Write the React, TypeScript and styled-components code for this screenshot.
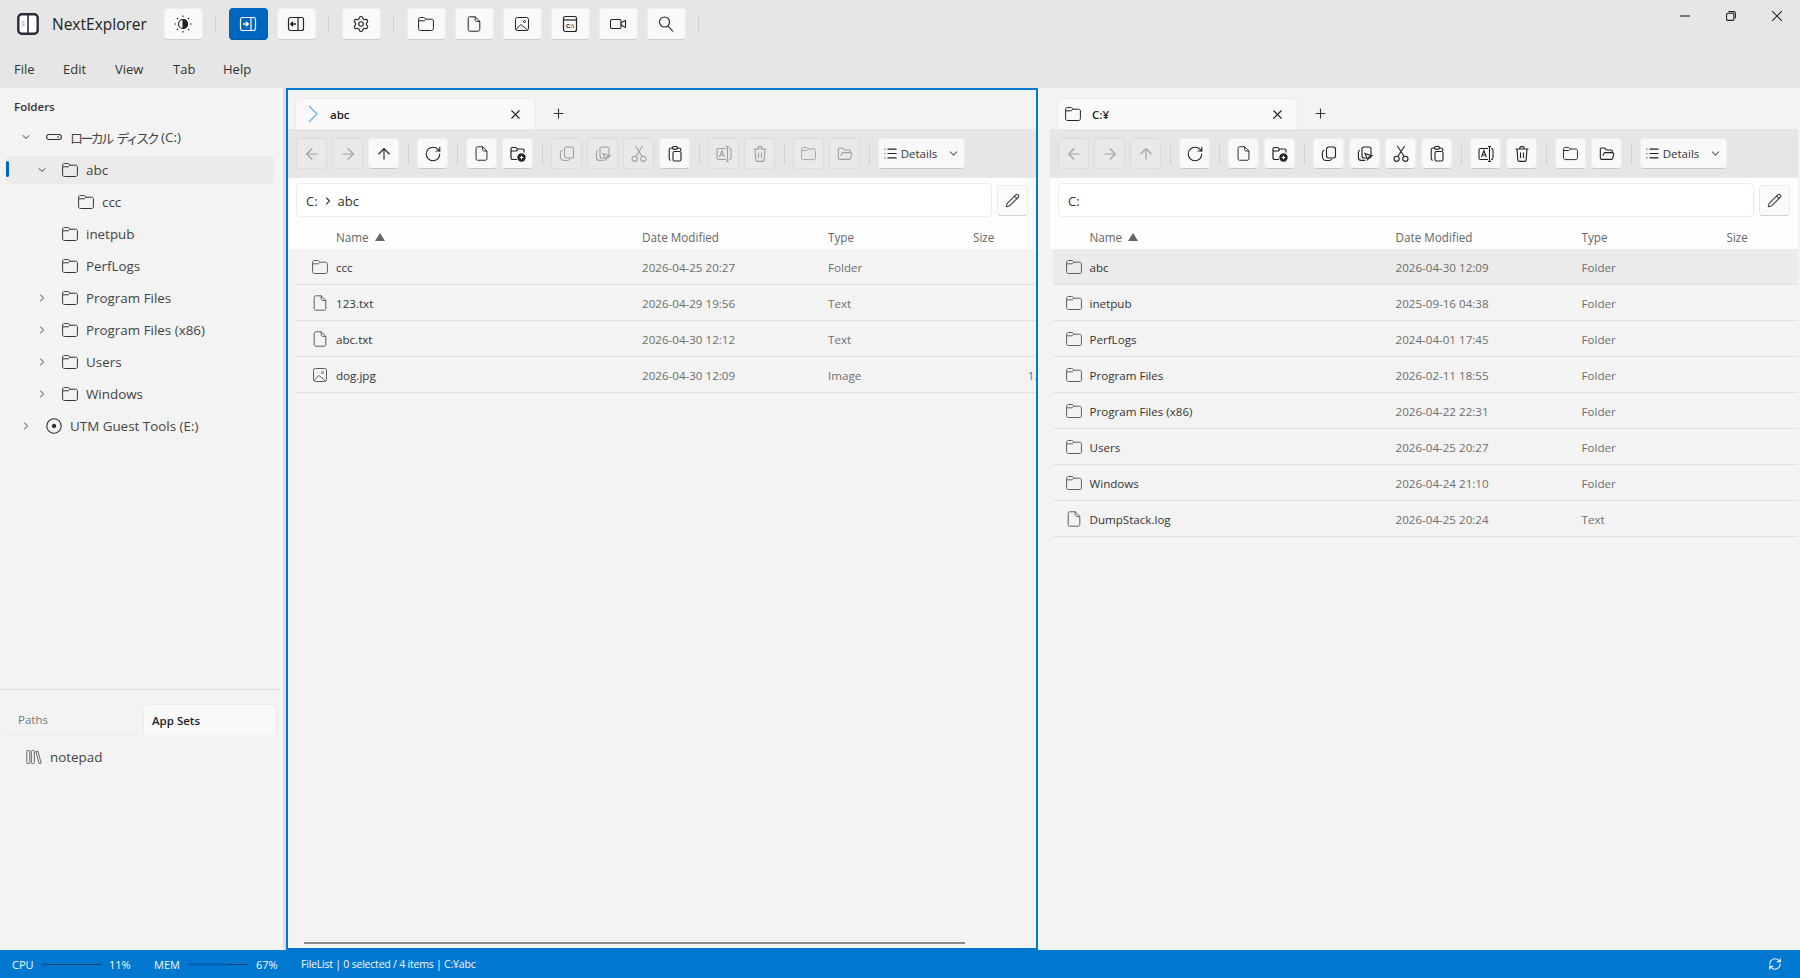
import React from 'react';
import styled, { createGlobalStyle, css } from 'styled-components';
import {
  ArrowLeft, ArrowRight, ArrowUp, ChevronDown, ChevronRight, FolderOpen, List,
  Pencil, Plus, RefreshCw, RotateCw, Settings, Video, X,
} from 'lucide-react';

const FONT = '"Open Sans", "Noto Sans CJK JP", sans-serif';

const GlobalStyle = createGlobalStyle`
  html, body, #root { margin: 0; height: 100%; }
  body { font-family: ${FONT}; background: #e6e6e6; color: #222; overflow: hidden; }
  * { box-sizing: border-box; }
`;

const Shell = styled.div`
  display: flex;
  flex-direction: column;
  width: 1800px;
  height: 978px;
`;

const TitleBar = styled.div`
  display: flex;
  align-items: center;
  height: 48px;
  padding: 0 0 0 17px;
  flex: none;
`;

const Logo = styled.svg`
  width: 22px;
  height: 22px;
  margin-right: 13px;
  flex: none;
`;

const AppName = styled.div`
  width: 111.5px;
  font-size: 15.5px;
  font-weight: 500;
  color: #222;
`;

const TitleGroup = styled.div`
  display: flex;
  align-items: center;
  gap: 9px;
`;

const TitleButton = styled.div<{ $active?: boolean }>`
  display: flex;
  align-items: center;
  justify-content: center;
  width: 39px;
  height: 32px;
  border-radius: 4px;
  border: 1px solid ${(p) => (p.$active ? '#0067c0' : '#ededed')};
  border-bottom-color: ${(p) => (p.$active ? '#005a9e' : '#cdcdcd')};
  background: ${(p) => (p.$active ? '#0067c0' : '#f9f9f9')};
  color: ${(p) => (p.$active ? '#fff' : '#222')};
`;

const TitleSep = styled.div`
  width: 1px;
  height: 16px;
  margin: 0 12.5px;
  background: #d2d2d2;
`;

const WindowControls = styled.div`
  display: flex;
  align-items: center;
  gap: 36px;
  margin-left: auto;
  margin-right: 18px;
  align-self: flex-start;
  padding-top: 11px;
`;

const MenuBar = styled.div`
  display: flex;
  align-items: center;
  height: 40px;
  padding: 2px 0 0 14px;
  flex: none;
`;

const MenuItem = styled.div<{ $w: number }>`
  width: ${(p) => p.$w}px;
  font-size: 13px;
  color: #333;
`;

const Workspace = styled.div`
  display: flex;
  flex: 1;
  min-height: 0;
`;

const Sidebar = styled.div`
  display: flex;
  flex-direction: column;
  width: 283px;
  flex: none;
  background: #f3f3f3;
`;

const Sash = styled.div`
  width: 3px;
  flex: none;
  background: #dedede;
`;

const TreeSection = styled.div`
  height: 602px;
  padding: 10px 6px 0 6px;
  border-bottom: 1px solid #dcdcdc;
  margin-right: 3px;
`;

const SectionLabel = styled.div`
  font-size: 11.5px;
  font-weight: 600;
  color: #333;
  margin: 0 0 7px 8px;
  height: 18px;
  line-height: 18px;
`;

const TreeRow = styled.div<{ $depth: number; $selected?: boolean; $gap: number }>`
  position: relative;
  display: flex;
  align-items: center;
  height: 28px;
  margin-bottom: ${(p) => p.$gap}px;
  padding-left: ${(p) => p.$depth}px;
  border-radius: 4px;
  font-size: 13.4px;
  color: #444;
  white-space: pre;
  background: ${(p) => (p.$selected ? '#ebebeb' : 'transparent')};
  ${(p) =>
    p.$selected &&
    css`
      &::before {
        content: '';
        position: absolute;
        left: 0;
        top: 5px;
        width: 3px;
        height: 16px;
        border-radius: 2px;
        background: #0067c0;
      }
    `}
`;

const KanaLabel = styled.span`
  font-size: 13px;
  letter-spacing: -2.6px;
  word-spacing: 4px;
  margin-right: 4px;
`;

const Chevron = styled.span`
  display: flex;
  width: 12px;
  margin-right: 14px;
  color: #8a8a8a;
  flex: none;
`;

const TreeIcon = styled.span`
  display: flex;
  width: 16px;
  margin-right: 8px;
  color: #333;
  flex: none;
`;

const BottomTabs = styled.div`
  display: flex;
  align-items: flex-end;
  height: 31px;
  margin: 14px 6px 0 2px;
  flex: none;
`;

const BottomTab = styled.div<{ $active?: boolean }>`
  height: ${(p) => (p.$active ? '31px' : '30px')};
  width: ${(p) => (p.$active ? '134px' : '141px')};
  padding-left: ${(p) => (p.$active ? '8px' : '16px')};
  display: flex;
  align-items: center;
  font-size: 11.5px;
  font-weight: ${(p) => (p.$active ? 600 : 400)};
  color: ${(p) => (p.$active ? '#222' : '#777')};
  background: ${(p) => (p.$active ? '#f9f9f9' : 'transparent')};
  border: 1px solid #ececec;
  border-width: ${(p) => (p.$active ? '1px 1px 0 1px' : '0 0 1px 0')};
  border-radius: ${(p) => (p.$active ? '6px 6px 0 0' : '0')};
`;

const AppSetRow = styled.div`
  display: flex;
  align-items: center;
  gap: 8px;
  height: 28px;
  margin-top: 8px;
  padding-left: 26px;
  font-size: 13.4px;
  color: #444;
`;

const Panes = styled.div`
  display: flex;
  flex: 1;
  min-width: 0;
  gap: 10px;
  background: #f3f3f3;
`;

const Pane = styled.div<{ $active?: boolean }>`
  display: flex;
  flex-direction: column;
  width: 752px;
  flex: none;
  overflow: hidden;
  position: relative;
  background: #f3f3f3;
  border: 2px solid ${(p) => (p.$active ? '#0078d0' : 'transparent')};
`;

const TabStrip = styled.div`
  display: flex;
  align-items: flex-end;
  height: 39px;
  padding-left: 7px;
  flex: none;
`;

const Tab = styled.div`
  display: flex;
  align-items: center;
  width: 241px;
  height: 31px;
  padding: 0 12px 0 7px;
  background: #f9f9f9;
  border: 1px solid #ececec;
  border-bottom: 0;
  border-radius: 6px 6px 0 0;
  font-size: 11.5px;
  font-weight: 600;
  color: #222;
`;

const TabIcon = styled.span`
  display: flex;
  width: 27px;
  flex: none;
  color: #222;
`;

const TabTitle = styled.span`
  flex: 1;
`;

const TabAdd = styled.div`
  display: flex;
  align-self: center;
  margin: 8px 0 0 15px;
  color: #333;
`;

const Toolbar = styled.div`
  display: flex;
  align-items: center;
  gap: 5px;
  height: 49px;
  padding: 0 0 0 8px;
  background: #e6e6e6;
  flex: none;
`;

const ToolButton = styled.div<{ $off?: boolean; $wide?: boolean }>`
  display: flex;
  align-items: center;
  justify-content: center;
  width: ${(p) => (p.$wide ? '87px' : '31px')};
  height: 31px;
  border-radius: 4px;
  border: 1px solid ${(p) => (p.$off ? '#dcdcdc' : '#ededed')};
  border-bottom-color: ${(p) => (p.$off ? '#dcdcdc' : '#c8c8c8')};
  background: ${(p) => (p.$off ? '#e9e9e9' : '#f9f9f9')};
  color: ${(p) => (p.$off ? '#a0a0a0' : '#222')};
  font-size: 11.5px;
  flex: none;
`;

const ToolSep = styled.div`
  width: 1px;
  height: 20px;
  margin: 0 3.5px;
  background: #d0d0d0;
  flex: none;
`;

const DetailsLabel = styled.span`
  margin: 0 10px 0 3px;
  color: #333;
`;

const DetailsCaret = styled.span`
  display: flex;
  color: #666;
`;

const AddressRow = styled.div`
  display: flex;
  align-items: flex-end;
  gap: 5px;
  height: 39px;
  padding: 0 8px;
  background: #fefefe;
  flex: none;
`;

const AddressBox = styled.div`
  flex: 1;
  display: flex;
  align-items: center;
  gap: 4px;
  height: 34px;
  padding: 1px 0 0 9px;
  background: #fff;
  border: 1px solid #ededed;
  border-radius: 4px;
  font-size: 13px;
  color: #333;
`;

const EditButton = styled.div`
  display: flex;
  align-items: center;
  justify-content: center;
  width: 31px;
  height: 31px;
  margin-bottom: 1.5px;
  flex: none;
  border-radius: 4px;
  border: 1px solid #ececec;
  border-bottom-color: #d0d0d0;
  background: #fbfbfb;
  color: #444;
`;

const ListArea = styled.div<{ $inset: number }>`
  width: 760px;
  margin-left: ${(p) => p.$inset}px;
  flex: 1;
`;

const ListGrid = css<{ $lead: number }>`
  display: grid;
  grid-template-columns: ${(p) => p.$lead}px 306px 186px 145px 92px;
  align-items: center;
`;

const HeaderRow = styled.div<{ $lead: number; $inset: number }>`
  ${ListGrid}
  height: 32px;
  margin-left: ${(p) => -p.$inset}px;
  padding: 7px 0 0 ${(p) => p.$inset}px;
  background: #fefefe;
  font-size: 11.7px;
  font-weight: 500;
  color: #666;
`;

const HeaderCell = styled.div<{ $col: number }>`
  grid-column: ${(p) => p.$col};
  display: flex;
  align-items: center;
  gap: 6px;
`;

const SortArrow = styled.span`
  width: 0;
  height: 0;
  border-left: 5px solid transparent;
  border-right: 5px solid transparent;
  border-bottom: 8px solid #666;
`;

const FileRow = styled.div<{ $lead: number; $selected?: boolean }>`
  ${ListGrid}
  height: 36px;
  padding-top: 1px;
  border-bottom: 1px solid #e2e2e2;
  background: ${(p) => (p.$selected ? '#ebebeb' : 'transparent')};
  font-size: 11.6px;
  color: #6e6e6e;
`;

const FileIcon = styled.span`
  display: flex;
  justify-content: flex-end;
  padding-right: 8px;
  color: #5c5c5c;
`;

const FileName = styled.span`
  color: #333;
`;

const SizeCell = styled.span`
  text-align: right;
  white-space: nowrap;
`;

const Scrollbar = styled.div`
  position: absolute;
  left: 16px;
  bottom: 4px;
  width: 661px;
  height: 2px;
  background: #8a8a8a;
`;

const StatusBar = styled.div`
  display: flex;
  align-items: center;
  height: 28px;
  padding: 0 18px 0 12px;
  background: #0078d0;
  color: #f4f9fd;
  font-size: 11px;
  flex: none;
`;

const StatLabel = styled.span<{ $w: number }>`
  width: ${(p) => p.$w}px;
  flex: none;
`;

const Meter = styled.div`
  position: relative;
  width: 60px;
  height: 1px;
  margin-right: 8px;
  background: #0b3f6b;
  flex: none;
`;

const MeterFill = styled.div`
  position: absolute;
  left: 0;
  top: -1px;
  height: 3px;
  border-radius: 2px;
  background: #0063b8;
`;

const StatValue = styled.span`
  width: 45px;
  flex: none;
`;

const StatusText = styled.span`
  font-size: 10.6px;
  letter-spacing: -0.25px;
`;

const StatusSync = styled.span`
  display: flex;
  margin-left: auto;
`;

const S = { strokeWidth: 1.1, absoluteStrokeWidth: true };

const FolderGlyph = ({ size = 16 }: { size?: number }) => (
  <svg width={size} height={size} viewBox="0 0 16 16" fill="none" stroke="currentColor" strokeWidth="1">
    <path d="M.6 3.3c0-1 .8-1.8 1.8-1.8h3.3c.4 0 .8.2 1.1.5L8 3.2h5.6c1 0 1.8.8 1.8 1.8v7.7c0 1-.8 1.8-1.8 1.8H2.4c-1 0-1.8-.8-1.8-1.8z" />
    <path d="M.6 4.8h5.2c.5 0 .9-.2 1.2-.5L8 3.2" />
  </svg>
);

const FileGlyph = ({ size = 16 }: { size?: number }) => (
  <svg width={size} height={size} viewBox="0 0 16 16" fill="none" stroke="currentColor" strokeWidth="1">
    <path d="M3.8.8h5.4l4.6 4.6v8.3c0 .9-.7 1.5-1.5 1.5H3.8c-.9 0-1.6-.6-1.6-1.5V2.3c0-.8.7-1.5 1.6-1.5z" />
    <path d="M9.2.8v3c0 .9.7 1.6 1.6 1.6h3" />
  </svg>
);

const ImageGlyph = ({ size = 16 }: { size?: number }) => (
  <svg width={size} height={size} viewBox="0 0 16 16" fill="none" stroke="currentColor" strokeWidth="1">
    <rect x="1.5" y="1.5" width="13" height="13" rx="2" />
    <path d="M2 13.5l4.2-4.4c.5-.5 1.1-.5 1.6 0l5.8 5" />
    <circle cx="10.5" cy="5.5" r="1" />
  </svg>
);

const TabChevron = () => (
  <svg width="16" height="18" viewBox="0 0 16 18" fill="none" stroke="#5db4f5" strokeWidth="1.2">
    <path d="M6 1l8 8-8 8" />
  </svg>
);

const NewFolderGlyph = () => (
  <svg width="18" height="18" viewBox="0 0 18 18" fill="none" stroke="currentColor" strokeWidth="1.2">
    <path d="M8 14.5H3.6c-.9 0-1.6-.7-1.6-1.6V4.1c0-.9.7-1.6 1.6-1.6h2.6c.4 0 .7.1 1 .4l1.1 1.1h5.1c.9 0 1.6.7 1.6 1.6v2" />
    <path d="M2 6h5.5l1.3-1.6" />
    <circle cx="12.5" cy="12.5" r="3.6" fill="currentColor" />
    <path d="M10.8 12.5h3.4M12.5 10.8v3.4" stroke="#fff" />
  </svg>
);

const CopyGlyph = () => (
  <svg width="18" height="18" viewBox="0 0 18 18" fill="none" stroke="currentColor" strokeWidth="1.1">
    <rect x="6.5" y="2" width="9" height="11" rx="2.2" />
    <path d="M4.4 5c-1.2.4-2 1.4-2 2.6v4.2c0 2 1.6 3.7 3.7 3.7h3.2c1 0 1.9-.6 2.3-1.5" />
  </svg>
);

const CopySelectGlyph = () => (
  <svg width="18" height="18" viewBox="0 0 18 18" fill="none" stroke="currentColor" strokeWidth="1.1">
    <rect x="6" y="2" width="9" height="11" rx="2" />
    <path d="M4 5.2c-1 .3-1.6 1-1.6 2v5.2c0 1.7 1.3 3 3 3h4" />
    <path d="M9 8.5l7 2.2-3 1.2-1.2 3z" fill="#e9e9e9" />
  </svg>
);

const ScissorsGlyph = () => (
  <svg width="18" height="18" viewBox="0 0 18 18" fill="none" stroke="currentColor" strokeWidth="1.1">
    <circle cx="4.6" cy="13.8" r="2.6" />
    <circle cx="13.4" cy="13.8" r="2.6" />
    <path d="M5.8 11.5L12.6 1M12.2 11.5L5.4 1" />
  </svg>
);

const PasteGlyph = () => (
  <svg width="18" height="18" viewBox="0 0 18 18" fill="none" stroke="currentColor" strokeWidth="1.1">
    <rect x="6.5" y="1.5" width="5" height="2.6" rx="1" />
    <path d="M6.5 3H5c-1 0-1.8.8-1.8 1.8v8.7c0 1 .7 1.8 1.6 1.8M11.5 3H13c1 0 1.8.8 1.8 1.8V6" />
    <rect x="7" y="6.5" width="8" height="9.5" rx="1.6" />
  </svg>
);

const RenameGlyph = () => (
  <svg width="18" height="18" viewBox="0 0 18 18" fill="none" stroke="currentColor" strokeWidth="1.1">
    <path d="M11 3.5H3.5C2.7 3.5 2 4.2 2 5v8c0 .8.7 1.5 1.5 1.5H11M14 3.5h.5c.8 0 1.5.7 1.5 1.5v8c0 .8-.7 1.5-1.5 1.5H14" />
    <path d="M12.5 1.5v15M11 1.5h3M11 16.5h3" />
    <path d="M4.5 12l2.4-6.5L9.3 12M5.3 10h3.2" />
  </svg>
);

const TrashGlyph = () => (
  <svg width="18" height="18" viewBox="0 0 18 18" fill="none" stroke="currentColor" strokeWidth="1.1">
    <path d="M2.5 4h13M6.8 4V3c0-.8.6-1.4 1.4-1.4h1.6c.8 0 1.4.6 1.4 1.4v1" />
    <path d="M4 4l.8 10.6c.1 1 .9 1.8 1.9 1.8h4.6c1 0 1.8-.8 1.9-1.8L14 4" />
    <path d="M7.5 7.5v5.5M10.5 7.5v5.5" />
  </svg>
);

const SearchGlyph = () => (
  <svg width="18" height="18" viewBox="0 0 18 18" fill="none" stroke="currentColor" strokeWidth="1.1">
    <circle cx="7.5" cy="7" r="5" />
    <path d="M11 10.8l5 5.7" />
  </svg>
);

const ThemeGlyph = () => (
  <svg width="20" height="20" viewBox="0 0 20 20" fill="none" stroke="currentColor" strokeWidth="1.1">
    <circle cx="10" cy="10" r="4.5" />
    <path d="M10 5.5a4.5 4.5 0 0 1 0 9z" fill="currentColor" />
    <path d="M10 1.5v1.6M10 16.9v1.6M1.5 10h1.6M16.9 10h1.6M4 4l1.1 1.1M14.9 14.9L16 16M4 16l1.1-1.1M14.9 5.1L16 4" />
  </svg>
);

const PanelNextGlyph = () => (
  <svg width="18" height="18" viewBox="0 0 18 18" fill="none" stroke="currentColor" strokeWidth="1.2">
    <rect x="1.5" y="2.5" width="15" height="13" rx="2" />
    <path d="M12 2.5v13" />
    <path d="M4 9h5M7 6.8L9.2 9 7 11.2" strokeWidth="1.5" />
  </svg>
);

const PanelPrevGlyph = () => (
  <svg width="18" height="18" viewBox="0 0 18 18" fill="none" stroke="currentColor" strokeWidth="1.2">
    <rect x="1.5" y="2.5" width="15" height="13" rx="2" />
    <path d="M11 2.5v13" />
    <path d="M9 9H4M6 6.8L3.8 9 6 11.2" strokeWidth="1.5" />
  </svg>
);

const TerminalGlyph = () => (
  <svg width="18" height="18" viewBox="0 0 18 18" fill="none" stroke="currentColor" strokeWidth="1.2">
    <rect x="2.5" y="1.5" width="13" height="15" rx="2" />
    <path d="M2.5 5h13" />
    <text x="9" y="12.8" textAnchor="middle" fontSize="6" fontWeight="700" fill="currentColor" stroke="none" fontFamily="Liberation Sans, sans-serif">C:\</text>
  </svg>
);

const DriveGlyph = () => (
  <svg width="16" height="16" viewBox="0 0 16 16" fill="none" stroke="currentColor" strokeWidth="1.1">
    <rect x="0.7" y="5.5" width="14.6" height="5" rx="2.2" />
    <path d="M11 8h2" />
  </svg>
);

const DiscGlyph = () => (
  <svg width="16" height="16" viewBox="0 0 16 16" fill="none" stroke="currentColor" strokeWidth="1.1">
    <circle cx="8" cy="8" r="7.2" />
    <circle cx="8" cy="8" r="1.6" fill="currentColor" />
  </svg>
);

const LibraryGlyph = () => (
  <svg width="16" height="16" viewBox="0 0 16 16" fill="none" stroke="currentColor" strokeWidth="1" opacity="0.8">
    <rect x="0.8" y="1.5" width="3" height="13" rx="0.8" />
    <rect x="5.3" y="1.5" width="3" height="13" rx="0.8" />
    <path d="M9.8 2.5l2-.5 3.4 12-2 .6z" />
  </svg>
);

const RestoreGlyph = () => (
  <svg width="10" height="10" viewBox="0 0 10 10" fill="none" stroke="#222" strokeWidth="1.1">
    <rect x="0.6" y="2.2" width="7.2" height="7.2" rx="1" />
    <path d="M2.4 0.6h5.4c.9 0 1.6.7 1.6 1.6v5.2" />
  </svg>
);

const treeRows = [
  { name: <><KanaLabel>ローカル ディスク</KanaLabel>(C:)</>, id: 'c', depth: 14, icon: 'drive', chevron: 'down', gap: 5 },
  { name: 'abc', id: 'abc', depth: 30, icon: 'folder', chevron: 'down', selected: true },
  { name: 'ccc', id: 'ccc', depth: 72, icon: 'folder' },
  { name: 'inetpub', id: 'inetpub', depth: 56, icon: 'folder' },
  { name: 'PerfLogs', id: 'perflogs', depth: 56, icon: 'folder' },
  { name: 'Program Files', id: 'pf', depth: 30, icon: 'folder', chevron: 'right' },
  { name: 'Program Files (x86)', id: 'pf86', depth: 30, icon: 'folder', chevron: 'right' },
  { name: 'Users', id: 'users', depth: 30, icon: 'folder', chevron: 'right' },
  { name: 'Windows', id: 'windows', depth: 30, icon: 'folder', chevron: 'right' },
  { name: 'UTM Guest Tools (E:)', id: 'e', depth: 14, icon: 'disc', chevron: 'right' },
];

type Entry = { name: string; date: string; type: string; kind: string; size?: string };

const leftFiles: Entry[] = [
  { name: 'ccc', date: '2026-04-25 20:27', type: 'Folder', kind: 'folder' },
  { name: '123.txt', date: '2026-04-29 19:56', type: 'Text', kind: 'file' },
  { name: 'abc.txt', date: '2026-04-30 12:12', type: 'Text', kind: 'file' },
  { name: 'dog.jpg', date: '2026-04-30 12:09', type: 'Image', kind: 'image', size: '1.2 MB' },
];

const rightFiles: Entry[] = [
  { name: 'abc', date: '2026-04-30 12:09', type: 'Folder', kind: 'folder' },
  { name: 'inetpub', date: '2025-09-16 04:38', type: 'Folder', kind: 'folder' },
  { name: 'PerfLogs', date: '2024-04-01 17:45', type: 'Folder', kind: 'folder' },
  { name: 'Program Files', date: '2026-02-11 18:55', type: 'Folder', kind: 'folder' },
  { name: 'Program Files (x86)', date: '2026-04-22 22:31', type: 'Folder', kind: 'folder' },
  { name: 'Users', date: '2026-04-25 20:27', type: 'Folder', kind: 'folder' },
  { name: 'Windows', date: '2026-04-24 21:10', type: 'Folder', kind: 'folder' },
  { name: 'DumpStack.log', date: '2026-04-25 20:24', type: 'Text', kind: 'file' },
];

const KindIcon = ({ kind }: { kind: string }) => {
  if (kind === 'folder') return <FolderGlyph />;
  if (kind === 'image') return <ImageGlyph />;
  return <FileGlyph />;
};

type PaneProps = {
  active?: boolean;
  inset: number;
  lead: number;
  files: Entry[];
  enabled: boolean;
  tabTitle: string;
  address: React.ReactNode;
};

const FilePane = ({ active, inset, lead, files, enabled, tabTitle, address }: PaneProps) => (
  <Pane $active={active}>
    <TabStrip>
      <Tab>
        <TabIcon>{active ? <TabChevron /> : <FolderGlyph />}</TabIcon>
        <TabTitle>{tabTitle}</TabTitle>
        <X size={15} {...S} />
      </Tab>
      <TabAdd><Plus size={15} {...S} /></TabAdd>
    </TabStrip>
    <Toolbar>
      <ToolButton $off><ArrowLeft size={18} {...S} /></ToolButton>
      <ToolButton $off><ArrowRight size={18} {...S} /></ToolButton>
      <ToolButton $off={!active}><ArrowUp size={18} {...S} /></ToolButton>
      <ToolSep />
      <ToolButton><RotateCw size={18} {...S} /></ToolButton>
      <ToolSep />
      <ToolButton><FileGlyph size={15} /></ToolButton>
      <ToolButton><NewFolderGlyph /></ToolButton>
      <ToolSep />
      <ToolButton $off={!enabled}><CopyGlyph /></ToolButton>
      <ToolButton $off={!enabled}><CopySelectGlyph /></ToolButton>
      <ToolButton $off={!enabled}><ScissorsGlyph /></ToolButton>
      <ToolButton><PasteGlyph /></ToolButton>
      <ToolSep />
      <ToolButton $off={!enabled}><RenameGlyph /></ToolButton>
      <ToolButton $off={!enabled}><TrashGlyph /></ToolButton>
      <ToolSep />
      <ToolButton $off={!enabled}><FolderGlyph size={15} /></ToolButton>
      <ToolButton $off={!enabled}><FolderOpen size={16} {...S} /></ToolButton>
      <ToolSep />
      <ToolButton $wide>
        <List size={15} {...S} />
        <DetailsLabel>Details</DetailsLabel>
        <DetailsCaret><ChevronDown size={13} {...S} /></DetailsCaret>
      </ToolButton>
    </Toolbar>
    <AddressRow>
      <AddressBox>{address}</AddressBox>
      <EditButton><Pencil size={15} {...S} /></EditButton>
    </AddressRow>
    <ListArea $inset={inset}>
      <HeaderRow $lead={lead} $inset={inset}>
        <HeaderCell $col={2}>Name <SortArrow /></HeaderCell>
        <HeaderCell $col={3}>Date Modified</HeaderCell>
        <HeaderCell $col={4}>Type</HeaderCell>
        <HeaderCell $col={5}>Size</HeaderCell>
      </HeaderRow>
      {files.map((f, i) => (
        <FileRow key={f.name} $lead={lead} $selected={!active && i === 0}>
          <FileIcon><KindIcon kind={f.kind} /></FileIcon>
          <FileName>{f.name}</FileName>
          <span>{f.date}</span>
          <span>{f.type}</span>
          <SizeCell>{f.size}</SizeCell>
        </FileRow>
      ))}
    </ListArea>
    {active && <Scrollbar />}
  </Pane>
);

export default function App() {
  return (
    <Shell>
      <GlobalStyle />
      <TitleBar>
        <Logo viewBox="0 0 22 22" fill="none">
          <rect x="1.3" y="1.3" width="19.4" height="19.4" rx="3.5" fill="#fff" stroke="#2b2b3d" strokeWidth="2.4" />
          <path d="M11 1.5v19" stroke="#2b2b3d" strokeWidth="1.6" />
          <path d="M6 8v6M6 9h2M6 12h2" stroke="#9db8e8" strokeWidth="1" />
        </Logo>
        <AppName>NextExplorer</AppName>
        <TitleButton><ThemeGlyph /></TitleButton>
        <TitleSep />
        <TitleGroup>
          <TitleButton $active><PanelNextGlyph /></TitleButton>
          <TitleButton><PanelPrevGlyph /></TitleButton>
        </TitleGroup>
        <TitleSep />
        <TitleButton><Settings size={18} {...S} /></TitleButton>
        <TitleSep />
        <TitleGroup>
          <TitleButton><FolderGlyph /></TitleButton>
          <TitleButton><FileGlyph /></TitleButton>
          <TitleButton><ImageGlyph /></TitleButton>
          <TitleButton><TerminalGlyph /></TitleButton>
          <TitleButton><Video size={18} {...S} /></TitleButton>
          <TitleButton><SearchGlyph /></TitleButton>
        </TitleGroup>
        <TitleSep />
        <WindowControls>
          <svg width="10" height="10" viewBox="0 0 10 10" stroke="#222" strokeWidth="1.1"><path d="M0 5h10" /></svg>
          <RestoreGlyph />
          <svg width="10" height="10" viewBox="0 0 10 10" stroke="#222" strokeWidth="1.1"><path d="M0 0l10 10M10 0L0 10" /></svg>
        </WindowControls>
      </TitleBar>
      <MenuBar>
        <MenuItem $w={49}>File</MenuItem>
        <MenuItem $w={52}>Edit</MenuItem>
        <MenuItem $w={58}>View</MenuItem>
        <MenuItem $w={50}>Tab</MenuItem>
        <MenuItem $w={40}>Help</MenuItem>
      </MenuBar>
      <Workspace>
        <Sidebar>
          <TreeSection>
            <SectionLabel>Folders</SectionLabel>
            {treeRows.map((r) => (
              <TreeRow key={r.id} $depth={r.depth} $selected={r.selected} $gap={r.gap ?? 4}>
                {r.chevron && (
                  <Chevron>
                    {r.chevron === 'down' ? <ChevronDown size={12} {...S} /> : <ChevronRight size={12} {...S} />}
                  </Chevron>
                )}
                <TreeIcon>
                  {r.icon === 'drive' ? <DriveGlyph /> : r.icon === 'disc' ? <DiscGlyph /> : <FolderGlyph />}
                </TreeIcon>
                {r.name}
              </TreeRow>
            ))}
          </TreeSection>
          <BottomTabs>
            <BottomTab>Paths</BottomTab>
            <BottomTab $active>App Sets</BottomTab>
          </BottomTabs>
          <AppSetRow><LibraryGlyph />notepad</AppSetRow>
        </Sidebar>
        <Sash />
        <Panes>
          <FilePane
            active
            inset={8}
            lead={40}
            files={leftFiles}
            enabled={false}
            tabTitle="abc"
            address={<>C: <ChevronRight size={12} {...S} /> abc</>}
          />
          <FilePane inset={3} lead={36.5} files={rightFiles} enabled tabTitle="C:¥" address="C:" />
        </Panes>
      </Workspace>
      <StatusBar>
        <StatLabel $w={29}>CPU</StatLabel>
        <Meter><MeterFill style={{ width: '11%' }} /></Meter>
        <StatValue>11%</StatValue>
        <StatLabel $w={34}>MEM</StatLabel>
        <Meter><MeterFill style={{ width: '67%' }} /></Meter>
        <StatValue>67%</StatValue>
        <StatusText>FileList | 0 selected / 4 items | C:¥abc</StatusText>
        <StatusSync><RefreshCw size={14} {...S} /></StatusSync>
      </StatusBar>
    </Shell>
  );
}
